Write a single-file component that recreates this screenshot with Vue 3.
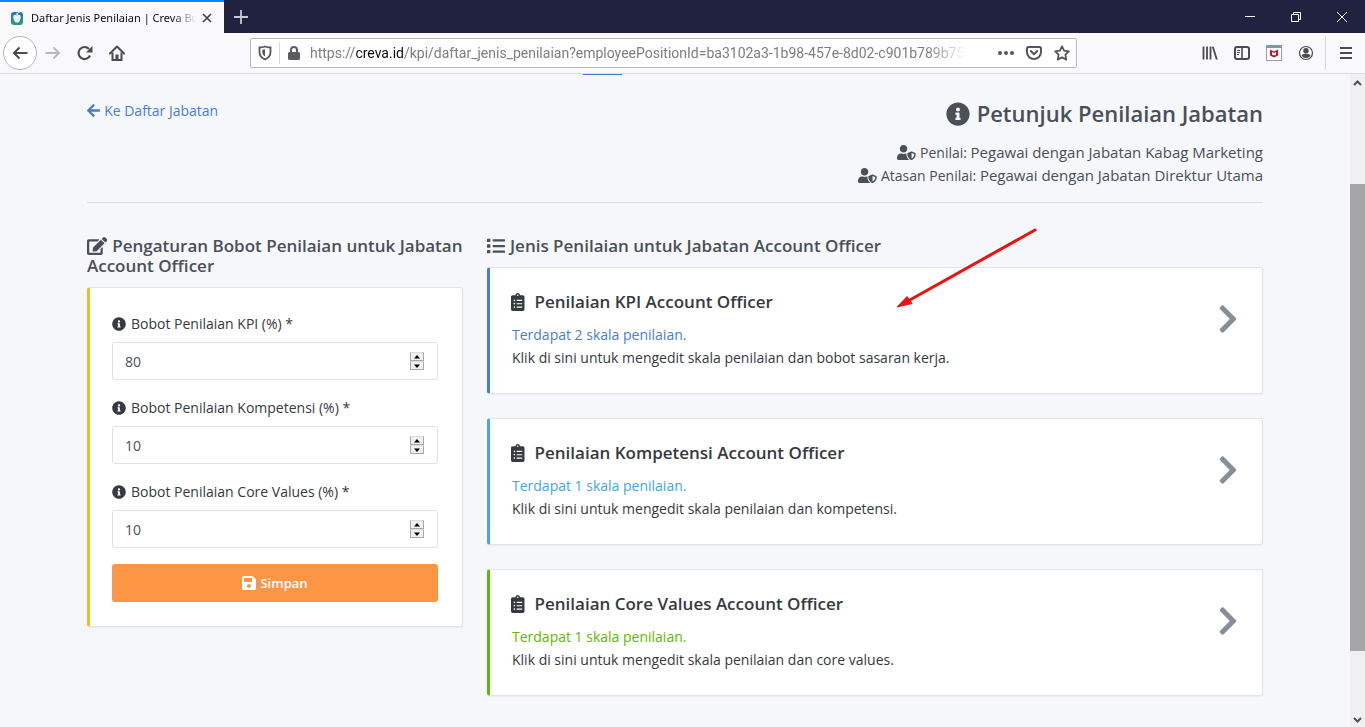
<script setup>
import { ref } from 'vue'

const paths = {
  info: 'M256 8C119.043 8 8 119.083 8 256c0 136.997 111.043 248 248 248s248-111.003 248-248C504 119.083 392.957 8 256 8zm0 110c23.196 0 42 18.804 42 42s-18.804 42-42 42-42-18.804-42-42 18.804-42 42-42zm56 254c0 6.627-5.373 12-12 12h-88c-6.627 0-12-5.373-12-12v-24c0-6.627 5.373-12 12-12h12v-64h-12c-6.627 0-12-5.373-12-12v-24c0-6.627 5.373-12 12-12h64c6.627 0 12 5.373 12 12v100h12c6.627 0 12 5.373 12 12v24z',
  shield: 'M622.3 271.1l-115.2-45c-4.1-1.6-12.6-3.7-22.2 0l-115.2 45c-10.7 4.2-17.7 14-17.7 24.9 0 111.6 68.7 188.8 132.9 213.9 9.6 3.7 18 1.6 22.2 0C558.4 489.9 640 420.5 640 296c0-10.9-7-20.7-17.7-24.9zM496 462.4V273.3l95.5 37.3c-5.6 87.1-60.9 135.4-95.5 151.8zM224 256c70.7 0 128-57.3 128-128S294.7 0 224 0 96 57.3 96 128s57.3 128 128 128zm96 40c0-2.5.8-4.8 1.1-7.2-2.5-.1-4.9-.8-7.5-.8h-16.7c-22.2 10.2-46.9 16-72.9 16s-50.6-5.8-72.9-16h-16.7C60.2 288 0 348.2 0 422.4V464c0 26.5 21.5 48 48 48h352c6.8 0 13.3-1.5 19.2-4-54-42.9-99.2-116.7-99.2-212z',
  clipboard: 'M336 64h-80c0-35.3-28.7-64-64-64s-64 28.7-64 64H48C21.5 64 0 85.5 0 112v352c0 26.5 21.5 48 48 48h288c26.5 0 48-21.5 48-48V112c0-26.5-21.5-48-48-48zM96 424c-13.3 0-24-10.7-24-24s10.7-24 24-24 24 10.7 24 24-10.7 24-24 24zm0-96c-13.3 0-24-10.7-24-24s10.7-24 24-24 24 10.7 24 24-10.7 24-24 24zm0-96c-13.3 0-24-10.7-24-24s10.7-24 24-24 24 10.7 24 24-10.7 24-24 24zm96-192c13.3 0 24 10.7 24 24s-10.7 24-24 24-24-10.7-24-24 10.7-24 24-24zm128 368c0 4.4-3.6 8-8 8H168c-4.4 0-8-3.6-8-8v-16c0-4.4 3.6-8 8-8h144c4.4 0 8 3.6 8 8v16zm0-96c0 4.4-3.6 8-8 8H168c-4.4 0-8-3.6-8-8v-16c0-4.4 3.6-8 8-8h144c4.4 0 8 3.6 8 8v16zm0-96c0 4.4-3.6 8-8 8H168c-4.4 0-8-3.6-8-8v-16c0-4.4 3.6-8 8-8h144c4.4 0 8 3.6 8 8v16z',
  chevron: 'M285.476 272.971L91.132 467.314c-9.373 9.373-24.569 9.373-33.941 0l-22.667-22.667c-9.357-9.357-9.375-24.522-.04-33.901L188.505 256 34.484 101.255c-9.335-9.379-9.317-24.544.04-33.901l22.667-22.667c9.373-9.373 24.569-9.373 33.941 0L285.475 239.03c9.373 9.372 9.373 24.568.001 33.941z',
}

const weights = ref([
  { id: 'kpi', label: 'Bobot Penilaian KPI (%) *', value: 80 },
  { id: 'kompetensi', label: 'Bobot Penilaian Kompetensi (%) *', value: 10 },
  { id: 'core', label: 'Bobot Penilaian Core Values (%) *', value: 10 },
])

const types = [
  { tone: 'blue', title: 'Penilaian KPI Account Officer', count: 'Terdapat 2 skala penilaian.', text: 'Klik di sini untuk mengedit skala penilaian dan bobot sasaran kerja.' },
  { tone: 'azure', title: 'Penilaian Kompetensi Account Officer', count: 'Terdapat 1 skala penilaian.', text: 'Klik di sini untuk mengedit skala penilaian dan kompetensi.' },
  { tone: 'green', title: 'Penilaian Core Values Account Officer', count: 'Terdapat 1 skala penilaian.', text: 'Klik di sini untuk mengedit skala penilaian dan core values.' },
]
</script>

<template>
  <div class="window">
    <header class="tabs">
      <div class="tab">
        <svg class="favicon" viewBox="0 0 14 14" aria-hidden="true">
          <defs><linearGradient id="fav" x1="0" y1="0" x2="0" y2="1"><stop offset="0" stop-color="#2c6fae" /><stop offset="1" stop-color="#2f9e6a" /></linearGradient></defs>
          <rect x="1" y="1" width="12" height="13" rx="3" fill="url(#fav)" />
          <path d="M7 4.500C4 2.500 2.500 5 3.500 8s2.500 4 3.500 3.500C8 12 9.500 11 10.500 8S10 2.500 7 4.500z" fill="#e6f4fb" />
          <path d="M7 5V1.500M7 4c0-2 1.500-3 3-3" stroke="#d9f0ef" fill="none" />
        </svg>
        <span class="tab-title">Daftar Jenis Penilaian | Creva Bu</span>
        <button class="plain tab-close" aria-label="Close tab">
          <svg width="10" height="10" viewBox="0 0 10 10"><path d="M1 1l8 8M9 1L1 9" stroke="#3f3f44" stroke-width="1.600" /></svg>
        </button>
      </div>
      <button class="plain new-tab" aria-label="New tab">
        <svg width="14" height="14" viewBox="0 0 14 14"><path d="M7 0v14M0 7h14" stroke="#c9c9d0" stroke-width="1.800" /></svg>
      </button>
      <div class="controls">
        <button class="plain" aria-label="Minimize"><svg width="10" height="10" viewBox="0 0 10 10"><path d="M0 4.500h10" stroke="#fff" /></svg></button>
        <button class="plain" aria-label="Restore"><svg width="10" height="10" viewBox="0 0 10 10" fill="none" stroke="#fff"><path d="M.5 2.500h7v7h-7zM2.500 2.500v-2h7v7h-2" /></svg></button>
        <button class="plain" aria-label="Close"><svg width="10" height="10" viewBox="0 0 10 10"><path d="M0 0l10 10M10 0L0 10" stroke="#fff" /></svg></button>
      </div>
    </header>

    <nav class="toolbar">
      <div class="nav-buttons">
        <button class="plain back" aria-label="Back"><svg width="16" height="16" viewBox="0 0 16 16"><path d="M15.500 8H2M7.500 2.500L2 8l5.500 5.500" fill="none" stroke="#4a4a4f" stroke-width="2" /></svg></button>
        <button class="plain" aria-label="Forward"><svg width="16" height="16" viewBox="0 0 16 16"><path d="M.5 8H14M8.500 2.500L14 8l-5.500 5.500" fill="none" stroke="#b9b9bd" stroke-width="2" /></svg></button>
        <button class="plain" aria-label="Reload"><svg width="16" height="16" viewBox="0 0 16 16"><path d="M13 10.500A6 6 0 1 1 12 4" fill="none" stroke="#4a4a4f" stroke-width="2.200" /><path d="M15.500 1v6.500H9z" fill="#4a4a4f" /></svg></button>
        <button class="plain" aria-label="Home"><svg width="16" height="16" viewBox="0 0 16 16"><path d="M1 8.500L8 1.500l7 7" fill="none" stroke="#4a4a4f" stroke-width="2" stroke-linecap="round" stroke-linejoin="round" /><path d="M3.500 7.500v7.500h9V7.500" fill="none" stroke="#4a4a4f" stroke-width="2" /><path d="M6.500 9.500h3V14h-3z" fill="#4a4a4f" /></svg></button>
      </div>
      <div class="address">
        <svg width="14" height="16" viewBox="0 0 14 16"><path d="M1.500 2.500Q4.500 2.500 7 1.500q2.500 1 5.500 1V7q0 5-5.500 7.500Q1.500 12 1.500 7z" fill="none" stroke="#55555a" stroke-width="1.800" /><path d="M7 4.200v7.300C5 10.300 4.300 8.800 4.300 7V4.800z" fill="#55555a" /></svg>
        <span class="rule"></span>
        <svg width="14" height="16" viewBox="0 0 14 16"><path d="M4 8V5a3 3 0 0 1 6 0v3" fill="none" stroke="#5b5b60" stroke-width="2" /><rect x="1" y="7" width="12" height="8" rx="1.500" fill="#5b5b60" /></svg>
        <span class="url">https://<b>creva.id</b>/kpi/daftar_jenis_penilaian?employeePositionId=ba3102a3-1b98-457e-8d02-c901b789b75</span>
        <span class="address-actions">
          <svg width="16" height="16" viewBox="0 0 16 16" fill="#55555a"><circle cx="2" cy="8" r="2" /><circle cx="8" cy="8" r="2" /><circle cx="14" cy="8" r="2" /></svg>
          <svg width="16" height="16" viewBox="0 0 16 16" fill="none" stroke="#55555a" stroke-width="2"><path d="M2.500 2h11q1.500 0 1.500 1.500V7a7 7 0 0 1-14 0V3.500Q1 2 2.500 2z" /><path d="M4.800 6L8 9.200 11.200 6" stroke-linecap="round" stroke-linejoin="round" /></svg>
          <svg width="16" height="16" viewBox="0 0 16 16"><path d="M8 1.300l2.100 4.400 4.700.6-3.400 3.400.8 4.900L8 12.300l-4.200 2.300.8-4.900L1.200 6.300l4.700-.6z" fill="none" stroke="#55555a" stroke-width="1.800" stroke-linejoin="round" /></svg>
        </span>
      </div>
      <div class="tools">
        <button class="plain" aria-label="Library"><svg width="16" height="16" viewBox="0 0 16 16"><path d="M1.500 1.500v13M5 1.500v13M8.500 1.500v13M10.800 1.800l4 12.700" fill="none" stroke="#4a4a4f" stroke-width="1.800" /></svg></button>
        <button class="plain" aria-label="Sidebar"><svg width="16" height="16" viewBox="0 0 16 16" fill="none" stroke="#4a4a4f"><rect x="1" y="2" width="14" height="12" rx="2" stroke-width="2" /><path d="M8 2v12" stroke-width="1.600" /><path d="M3 5.500h3M3 7.500h3M3 9.500h2" /></svg></button>
        <button class="plain" aria-label="Extension"><svg width="16" height="16" viewBox="0 0 16 16"><rect x=".5" y=".5" width="15" height="15" fill="#fff" stroke="#9a9fa6" /><path d="M0 0h16v3H0z" fill="#7f98a6" /><path d="M4 4.500l4 2 4-2v6L8 12.500l-4-2z" fill="#c4122f" /><path d="M6 7l2 1 2-1v2.500l-2 1-2-1z" fill="#fff" /></svg></button>
        <button class="plain" aria-label="Account"><svg width="16" height="16" viewBox="0 0 16 16"><circle cx="8" cy="8" r="6.500" fill="none" stroke="#4a4a4f" stroke-width="1.200" /><circle cx="8" cy="5.800" r="2.700" fill="#4a4a4f" /><path d="M3.500 10q4.500-2.500 9 0Q11.500 13 8 13t-4.500-3z" fill="#4a4a4f" /></svg></button>
        <span class="rule tall"></span>
        <button class="plain" aria-label="Menu"><svg width="16" height="16" viewBox="0 0 16 16"><path d="M2 3h12M2 8h12M2 13h12" stroke="#4a4a4f" stroke-width="2" /></svg></button>
      </div>
    </nav>

    <div class="viewport">
      <main class="page">
        <span class="nav-active"></span>
        <div class="container">
          <section class="intro">
            <a href="#" class="back-link">
              <svg viewBox="0 0 448 512" class="ico"><path fill="currentColor" d="M257.500 445.100l-22.200 22.200c-9.400 9.400-24.600 9.400-33.900 0L7 273c-9.400-9.400-9.400-24.600 0-33.900L201.400 44.700c9.400-9.400 24.600-9.400 33.900 0l22.200 22.200c9.500 9.500 9.300 25-.4 34.300L136.600 216H424c13.300 0 24 10.700 24 24v32c0 13.300-10.700 24-24 24H136.600l120.500 114.800c9.800 9.300 10 24.800.4 34.300z" /></svg>
              <span>Ke Daftar Jabatan</span>
            </a>
            <div class="summary">
              <h1><svg viewBox="0 0 512 512" class="ico"><path fill="currentColor" :d="paths.info" /></svg>Petunjuk Penilaian Jabatan</h1>
              <p><svg viewBox="0 0 640 512" class="ico"><path fill="currentColor" :d="paths.shield" /></svg>Penilai: <strong>Pegawai dengan Jabatan Kabag Marketing</strong></p>
              <p><svg viewBox="0 0 640 512" class="ico"><path fill="currentColor" :d="paths.shield" /></svg>Atasan Penilai: <strong>Pegawai dengan Jabatan Direktur Utama</strong></p>
            </div>
          </section>

          <div class="columns">
            <section>
              <h2><svg viewBox="0 0 576 512" class="ico"><path fill="currentColor" d="M402.600 83.200l90.200 90.200c3.800 3.800 3.800 10 0 13.800L274.400 405.600l-92.800 10.300c-12.400 1.400-22.900-9.100-21.500-21.500l10.300-92.800L388.800 83.200c3.800-3.800 10-3.800 13.800 0zm162-22.900l-48.800-48.800c-15.200-15.200-39.900-15.200-55.200 0l-35.400 35.400c-3.800 3.800-3.800 10 0 13.800l90.200 90.200c3.800 3.800 10 3.800 13.800 0l35.400-35.400c15.200-15.300 15.200-40 0-55.200zM384 346.200V448H64V128h229.800c3.200 0 6.200-1.300 8.500-3.500l40-40c7.600-7.600 2.200-20.500-8.500-20.500H48C21.500 64 0 85.500 0 112v352c0 26.500 21.500 48 48 48h352c26.500 0 48-21.500 48-48V306.200c0-10.700-12.900-16-20.500-8.500l-40 40c-2.200 2.300-3.500 5.300-3.500 8.500z" /></svg>Pengaturan Bobot Penilaian untuk Jabatan Account Officer</h2>
              <form class="card form yellow" @submit.prevent>
                <div v-for="w in weights" :key="w.id" class="field">
                  <label :for="w.id"><svg viewBox="0 0 512 512" class="ico"><path fill="currentColor" :d="paths.info" /></svg>{{ w.label }}</label>
                  <div class="number">
                    <input :id="w.id" v-model="w.value" type="number" />
                    <span class="spinner">
                      <button type="button" aria-label="Tambah" @click="w.value++"><svg width="6" height="4" viewBox="0 0 6 4"><path d="M3 0l3 3.500H0z" /></svg></button>
                      <button type="button" aria-label="Kurangi" @click="w.value--"><svg width="6" height="4" viewBox="0 0 6 4"><path d="M3 4L0 .5h6z" /></svg></button>
                    </span>
                  </div>
                </div>
                <button class="save" type="submit">
                  <svg viewBox="0 0 448 512" class="ico"><path fill="currentColor" d="M433.941 129.941l-83.882-83.882A48 48 0 0 0 316.118 32H48C21.490 32 0 53.490 0 80v352c0 26.510 21.490 48 48 48h352c26.510 0 48-21.490 48-48V163.882a48 48 0 0 0-14.059-33.941zM224 416c-35.346 0-64-28.654-64-64 0-35.346 28.654-64 64-64s64 28.654 64 64c0 35.346-28.654 64-64 64zm96-304.520V212c0 6.627-5.373 12-12 12H76c-6.627 0-12-5.373-12-12V108c0-6.627 5.373-12 12-12h228.520c3.183 0 6.235 1.264 8.485 3.515l3.480 3.480A11.996 11.996 0 0 1 320 111.480z" /></svg>
                  <span>Simpan</span>
                </button>
              </form>
            </section>

            <section class="types">
              <h2><svg viewBox="0 0 512 512" class="ico"><path fill="currentColor" d="M80 368H16a16 16 0 0 0-16 16v64a16 16 0 0 0 16 16h64a16 16 0 0 0 16-16v-64a16 16 0 0 0-16-16zm0-320H16A16 16 0 0 0 0 64v64a16 16 0 0 0 16 16h64a16 16 0 0 0 16-16V64a16 16 0 0 0-16-16zm0 160H16a16 16 0 0 0-16 16v64a16 16 0 0 0 16 16h64a16 16 0 0 0 16-16v-64a16 16 0 0 0-16-16zm416 176H176a16 16 0 0 0-16 16v32a16 16 0 0 0 16 16h320a16 16 0 0 0 16-16v-32a16 16 0 0 0-16-16zm0-320H176a16 16 0 0 0-16 16v32a16 16 0 0 0 16 16h320a16 16 0 0 0 16-16V80a16 16 0 0 0-16-16zm0 160H176a16 16 0 0 0-16 16v32a16 16 0 0 0 16 16h320a16 16 0 0 0 16-16v-32a16 16 0 0 0-16-16z" /></svg>Jenis Penilaian untuk Jabatan Account Officer</h2>
              <div class="type-list">
                <a v-for="t in types" :key="t.tone" href="#" class="card type" :class="t.tone">
                  <div>
                    <h3><svg viewBox="0 0 384 512" class="ico"><path fill="currentColor" :d="paths.clipboard" /></svg>{{ t.title }}</h3>
                    <p class="count">{{ t.count }}</p>
                    <p>{{ t.text }}</p>
                  </div>
                  <svg viewBox="0 0 320 512" class="chevron"><path fill="currentColor" :d="paths.chevron" /></svg>
                </a>
              </div>
              <svg class="pointer" width="140" height="82" viewBox="0 0 140 82" aria-hidden="true">
                <path d="M138 2L11 73" stroke="#f01010" stroke-width="3" stroke-linecap="round" />
                <path d="M0 79L10 68.500l5 7z" fill="#f01010" stroke="#f01010" />
              </svg>
            </section>
          </div>
        </div>
      </main>
      <div class="scrollbar" aria-hidden="true">
        <svg width="15" height="17" viewBox="0 0 15 17"><path d="M4 11l3.500-3.500L11 11" fill="none" stroke="#505050" stroke-width="2" /></svg>
        <div class="gap-top"></div>
        <div class="thumb"></div>
        <div class="gap-bottom"></div>
        <svg width="15" height="17" viewBox="0 0 15 17"><path d="M4 8l3.500 3.500L11 8" fill="none" stroke="#505050" stroke-width="2" /></svg>
      </div>
    </div>
  </div>
</template>

<style>
body { margin: 0; overflow: hidden; }
</style>

<style scoped>
* { box-sizing: border-box; }
.window { display: flex; flex-direction: column; height: 100vh; font-family: "Open Sans", "Noto Sans", sans-serif; font-size: 14px; line-height: 23px; color: #343a40; }
svg { flex: none; }
h1, h2, h3, p { margin: 0; }
.plain { border: 0; padding: 0; background: none; display: flex; align-items: center; justify-content: center; }

.tabs { display: flex; height: 33px; flex: none; background: #20223f; }
.tab { display: flex; align-items: center; width: 224px; padding: 0 7px 0 10px; background: #f9f9fb; border-top: 2px solid #0a84ff; }
.favicon { width: 14px; height: 14px; margin-right: 7px; }
.tab-title { flex: 1; min-width: 0; overflow: hidden; white-space: nowrap; font-family: "Noto Sans", sans-serif; font-size: 11px; color: #0c0c0d; mask-image: linear-gradient(to right, #000 85%, transparent); }
.tab-close { width: 20px; height: 20px; }
.new-tab { width: 34px; }
.controls { display: flex; margin-left: auto; }
.controls button { width: 46px; }

.toolbar { display: flex; align-items: center; height: 41px; flex: none; background: #f9f9fb; border-bottom: 1px solid #dcdde2; }
.nav-buttons { display: flex; width: 250px; padding-left: 3px; }
.nav-buttons button { width: 32px; height: 34px; }
.nav-buttons .back { width: 34px; border: 1px solid #b5b5b9; border-radius: 50%; background: #fff; }
.address { display: flex; align-items: center; flex: 1; min-width: 0; max-width: 827px; height: 30px; padding: 0 6px 0 7px; background: #fff; border: 1px solid #b9b9bd; border-radius: 2px; }
.rule { width: 1px; height: 22px; margin: 0 7px; background: #d7d7db; }
.rule.tall { height: 34px; margin: 0 4px 0 3px; }
.url { flex: 1; min-width: 0; margin-left: 9px; overflow: hidden; white-space: nowrap; font-family: Roboto, "Open Sans", sans-serif; color: #7d7d82; mask-image: linear-gradient(to right, #000 94%, transparent); }
.url b { font-weight: 400; color: #0c0c0d; }
.address-actions { display: flex; gap: 12px; margin-left: 32px; }
.tools { display: flex; align-items: center; margin-left: auto; padding-right: 3px; }
.tools button { width: 32px; height: 32px; }

.viewport { display: flex; flex: 1; min-height: 0; }
.page { position: relative; flex: 1; min-width: 0; overflow: hidden; background: #f5f7fb; }
.nav-active { position: absolute; top: 0; left: 583px; width: 39px; height: 1px; background: #467fcf; }
.container { max-width: 1224px; margin: 0 auto; padding: 24px; }
.ico { height: 1em; vertical-align: -2px; }

.intro { display: flex; justify-content: space-between; align-items: flex-start; padding-bottom: 15px; border-bottom: 1px solid #dbdde2; }
.back-link { display: flex; align-items: center; gap: 4px; padding-top: 1px; color: #467fcf; text-decoration: none; }
.back-link .ico { height: 15px; }
.summary { text-align: right; color: #495057; }
.summary p .ico { height: 15px; margin-right: 4px; }
.summary strong { font-size: 15px; font-weight: 500; }
h1 { margin-bottom: 13px; font-size: 22px; line-height: 30px; font-weight: 600; }
h1 .ico { height: 24px; margin-right: 7px; vertical-align: -4px; }

.columns { display: grid; grid-template-columns: repeat(3, 1fr); column-gap: 24px; align-items: start; padding-top: 33px; }
.types { position: relative; grid-column: span 2; }
.type-list { display: flex; flex-direction: column; gap: 24px; }
h2 { margin-bottom: 11px; font-size: 17px; line-height: 20px; font-weight: 600; color: #495057; }
h2 .ico { height: 18px; margin-right: 5px; vertical-align: -3px; }

.card { display: block; background: #fff; border: 1px solid #dfe3ea; border-left: 3px solid; border-radius: 3px; box-shadow: 0 1px 2px rgba(0, 0, 0, 0.05); }
.yellow { border-left-color: #e8c020; }
.blue { border-left-color: #467fcf; }
.azure { border-left-color: #45a5e6; }
.green { border-left-color: #5eba00; }
.form { padding: 24px 24px 24px 22px; }
.field { margin-bottom: 16px; }
.field label { display: block; margin-bottom: 7px; }
.field label .ico { height: 14px; margin-right: 5px; }
.number { display: flex; align-items: center; height: 38px; padding: 0 13px 0 12px; border: 1px solid #dfe1e6; border-radius: 3px; }
.number input { flex: 1; min-width: 0; border: 0; padding: 0; outline: 0; background: none; font: inherit; color: #495057; appearance: textfield; -moz-appearance: textfield; }
.number input::-webkit-inner-spin-button { appearance: none; margin: 0; }
.spinner { display: flex; flex-direction: column; }
.spinner button { display: flex; align-items: center; justify-content: center; width: 14px; height: 9px; padding: 0; background: #f0f0f0; border: 1px solid #a9a9a9; border-top-color: #dcdcdc; }
.save { display: flex; align-items: center; justify-content: center; gap: 4px; width: 100%; height: 38px; border: 0; border-radius: 3px; background: #fd9644; color: #fff; font: 600 13px "Open Sans", sans-serif; }
.save .ico { height: 16px; }

.type { display: flex; justify-content: space-between; align-items: flex-start; padding: 22px 24px 24px 21px; color: #343a40; text-decoration: none; }
.type p { padding-left: 1px; }
h3 { margin-bottom: 9px; font-size: 17px; line-height: 24px; font-weight: 600; }
h3 .ico { height: 18px; margin-right: 10px; vertical-align: -3px; }
.blue .count { color: #467fcf; }
.azure .count { color: #45a5e6; }
.green .count { color: #5eba00; }
.chevron { height: 32px; margin-top: 13px; color: #868e96; }
.pointer { position: absolute; top: -8px; right: 226px; }

.scrollbar { display: flex; flex-direction: column; width: 15px; flex: none; background: #f0f0f0; }
.gap-top { flex: 93; }
.thumb { flex: 467; background: #a6a6a6; }
.gap-bottom { flex: 59; }
</style>
